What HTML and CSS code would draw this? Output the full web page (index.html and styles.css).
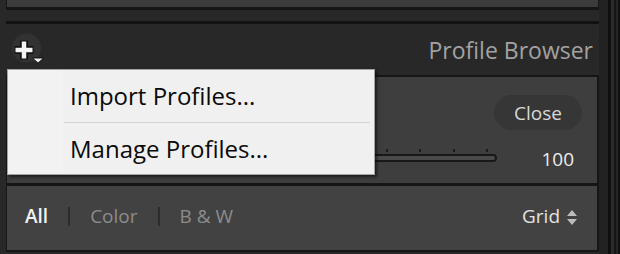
FILE: index.html
```html
<!DOCTYPE html>
<html lang="en">
  <head>
    <meta charset="UTF-8" />
    <meta name="viewport" content="width=device-width, initial-scale=1.0" />
    <title>Profile Browser</title>
    <link rel="stylesheet" href="styles.css">
  </head>
  <body>
    <div class="app">
      <div class="main">
        <!-- Panel above (cut off) -->
        <div class="top-panel"></div>
        <div class="rule"></div>

        <!-- Header -->
        <div class="header">
          <button class="add-btn" aria-label="Add">
            <svg width="34" height="32" viewBox="0 0 34 32">
              <circle cx="16.5" cy="15" r="14.5" fill="#323232" />
              <path d="M4.5 17H23.5M14 7.5V26.5" stroke="#111" stroke-width="8" />
              <path d="M5.5 17H22.5M14 8.5V25.5" stroke="#f4f4f4" stroke-width="4.5" />
              <path d="M22 24.5H34L28 30.5Z" fill="#111" />
              <path d="M23.5 25.5H32.5L28 29.5Z" fill="#f4f4f4" />
            </svg>
          </button>
          <span class="title">Profile Browser</span>
        </div>

        <!-- Browser panel -->
        <div class="browser">
          <div class="browser-top">
            <div class="close-row">
              <button class="close">Close</button>
            </div>
            <div class="amount-row">
              <div class="slider">
                <div class="ticks"></div>
                <div class="track"></div>
              </div>
              <span class="value">100</span>
            </div>
          </div>
          <div class="filters">
            <span class="filter active">All</span>
            <span class="sep"></span>
            <span class="filter">Color</span>
            <span class="sep"></span>
            <span class="filter">B &amp; W</span>
            <span class="view">
              Grid
              <svg width="10" height="15" viewBox="0 0 10 15">
                <path d="M5 0L10 6H0Z M0 9H10L5 15Z" fill="#bcbcbc" />
              </svg>
            </span>
          </div>
        </div>

        <!-- Add menu (open) -->
        <div class="menu">
          <div class="menu-item">Import Profiles...</div>
          <div class="menu-sep"></div>
          <div class="menu-item">Manage Profiles...</div>
        </div>
      </div>
      <div class="side"></div>
    </div>
  </body>
</html>
```

FILE: styles.css
```css
/* Lightroom-style dark panel */
body {
  margin: 0;
  background: #282828;
  font-family: "Open Sans", sans-serif;
  width: 620px;
  height: 254px;
  overflow: hidden;
}

.app {
  display: flex;
  height: 254px;
}

.main {
  position: relative;
  width: 593px;
  padding-left: 6px;
}

.top-panel {
  height: 10px;
  box-sizing: border-box;
  background: #3c3c3c;
  border: 1px solid #161616;
  border-top: none;
  border-bottom-width: 3px;
}

.rule {
  height: 3px;
  margin-top: 11px;
  background: #121212;
}

/* Header */
.header {
  height: 51px;
  display: flex;
  align-items: flex-start;
  padding-top: 9px;
  box-sizing: border-box;
}

.add-btn {
  margin-left: 4px;
  padding: 0;
  border: none;
  background: none;
  width: 34px;
  height: 32px;
}

.add-btn svg {
  display: block;
}

.title {
  margin-left: auto;
  margin-right: 6px;
  margin-top: 2px;
  font-size: 23px;
  line-height: 31px;
  color: #a2a2a2;
}

/* Browser panel */
.browser {
  border: 2px solid #161616;
  border-left-width: 1px;
}

.browser-top {
  height: 106px;
  background: #3e3e3e;
  border-bottom: 3px solid #161616;
}

.close-row {
  display: flex;
  justify-content: flex-end;
  padding: 18px 15px 0 0;
}

.close {
  width: 88px;
  height: 35px;
  border: none;
  border-radius: 18px;
  background: #363636;
  color: #d8d8d8;
  font-family: "Open Sans", sans-serif;
  font-size: 19px;
  padding: 0;
}

.amount-row {
  display: flex;
  align-items: flex-start;
  margin-top: 19px;
  padding-right: 23px;
}

.slider {
  margin-left: 23px;
  width: 467px;
}

.ticks {
  height: 3px;
  margin-bottom: 2px;
  background: repeating-linear-gradient(
    to left,
    transparent 0 9px,
    #1c1c1c 9px 11px,
    transparent 11px 33.33px
  );
}

.track {
  height: 8px;
  box-sizing: border-box;
  border: 2px solid #181818;
  border-radius: 4px;
  background: #4a4a4a;
}

.value {
  margin-left: auto;
  margin-top: -3px;
  font-size: 19px;
  line-height: 26px;
  color: #ececec;
}

/* Filter bar */
.filters {
  height: 64px;
  box-sizing: border-box;
  background: #424242;
  display: flex;
  align-items: flex-start;
  padding: 17px 20px 0 18px;
  font-size: 19px;
  line-height: 26px;
}

.filter {
  color: #8c8c8c;
}

.filter.active {
  color: #f2f2f2;
  font-weight: 600;
}

.sep {
  width: 2px;
  height: 19px;
  margin: 4px 20px 0;
  background: #2c2c2c;
}

.view {
  margin-left: auto;
  display: flex;
  align-items: center;
  gap: 7px;
  color: #e2e2e2;
}

.view svg {
  margin-top: 2px;
}

/* Context menu */
.menu {
  position: absolute;
  left: 7px;
  top: 69px;
  width: 368px;
  box-sizing: border-box;
  background: linear-gradient(to right, #f2f2f2 0 55px, #f0f0f0 55px);
  border: 1px solid #a4a4a4;
  box-shadow: 2px 2px 3px rgba(0, 0, 0, 0.55);
}

.menu-item {
  height: 52px;
  line-height: 52px;
  padding-left: 62px;
  font-size: 24px;
  color: #0a0a0a;
}

.menu-item:last-child {
  height: 50px;
  line-height: 50px;
}

.menu-sep {
  height: 1px;
  margin: 0 4px 1px 56px;
  background: #d4d4d4;
}

/* Right edge */
.side {
  width: 21px;
  background: linear-gradient(
    to right,
    #222 0 9px,
    #0f0f0f 9px 12px,
    #2c2c2c 12px 15px,
    #141414 15px 17px,
    #252525 17px 19px,
    #101010 19px 21px
  );
}
```
